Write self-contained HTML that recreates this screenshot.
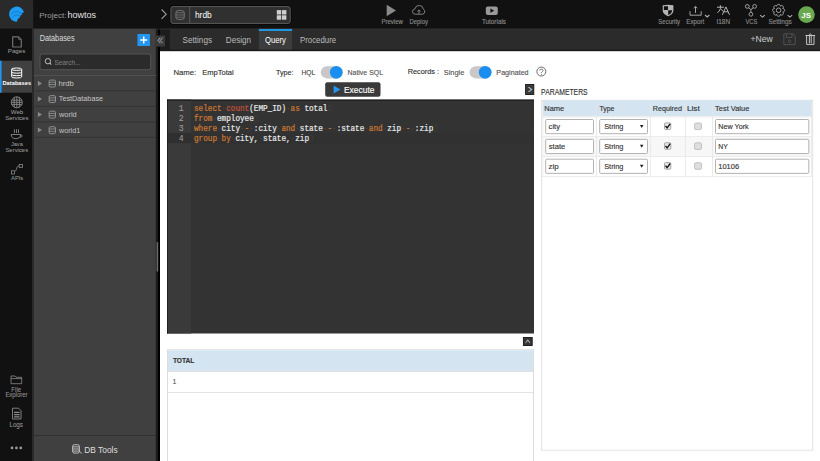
<!DOCTYPE html>
<html><head><meta charset="utf-8"><title>Query - hrdb</title>
<style>
html,body{margin:0;padding:0;background:#fff;width:820px;height:461px;overflow:hidden;font-family:"Liberation Sans", sans-serif;}
svg{display:block}
</style></head>
<body>
<svg width="820" height="461" viewBox="0 0 820 461">
<rect x="0" y="0" width="820" height="461" fill="#ffffff" />
<rect x="0" y="0" width="160" height="461" fill="#000000" />
<rect x="160" y="0" width="660" height="51.2" fill="#1a1a1a" />
<rect x="160" y="28" width="660" height="21.6" fill="#2b2b2b" />
<rect x="160" y="28" width="10" height="22.2" fill="#1c1c1c" />
<rect x="170" y="28.5" width="650" height="1" fill="#333333" />
<rect x="0" y="0" width="820" height="28.5" fill="#111111" />
<rect x="0" y="0" width="33.2" height="29" fill="#2a2a2a" />
<rect x="0" y="28.5" width="32" height="433" fill="#111111" />
<rect x="32" y="28.5" width="2.2" height="433" fill="#2a2a2a" />
<rect x="34" y="28.5" width="122" height="433" fill="#404040" />
<rect x="155.8" y="28.5" width="2.2" height="433" fill="#1a1a1a" />
<rect x="155.8" y="28.6" width="14.2" height="1" fill="#2e2e2e" />
<rect x="156.6" y="242" width="1.6" height="29.7" fill="#6a6a6a" rx="0.8"/>
<path d="M16.6,21.8 A7.6,7.6 0 1 1 24,12.2 L21.1,13.5 Q22.3,13.8 22.4,14.5 L19.7,16.1 Q20.4,16.5 20.4,17.1 L17.8,18.9 Q17.6,20.7 16.6,21.8 Z" fill="#1e9cf2"/>
<path d="M21.1,13.5 A6.4,6.4 0 0 0 11.2,14.3 M19.7,16.1 A4.7,4.7 0 0 0 12.4,17.4" fill="none" stroke="#1676cc" stroke-width="0.85"/>
<text x="39.19" y="17.5" font-size="7.971" fill="#9a9a9a" textLength="27.33" lengthAdjust="spacingAndGlyphs" font-family="'Liberation Sans', sans-serif">Project:</text>
<text x="67.48" y="17.5" font-size="8.767" fill="#e0e0e0" textLength="28.61" lengthAdjust="spacingAndGlyphs" font-family="'Liberation Sans', sans-serif">howtos</text>
<polyline points="161.6,9.5 166.2,14.15 161.6,18.8" fill="none" stroke="#9a9a9a" stroke-width="1.1"/>
<rect x="169.9" y="5.6" width="121.3" height="18.8" rx="2.6" fill="none" stroke="#090909" stroke-width="1"/>
<rect x="170.9" y="6.6" width="119.3" height="16.8" rx="2" fill="#303030" stroke="#5a5a5a" stroke-width="1"/>
<line x1="189.7" y1="7" x2="189.7" y2="23" stroke="#555555" stroke-width="1"/>
<rect x="175.9" y="10.6" width="8.4" height="8.8" rx="2.2" fill="none" stroke="#7a7a7a" stroke-width="0.9"/>
<path d="M176.2,12.8 H184 M176,15 H184.2 M176.2,17.2 H184" stroke="#7a7a7a" stroke-width="0.8"/>
<text x="194.93" y="17.7" font-size="8.904" fill="#ffffff" textLength="16.80" lengthAdjust="spacingAndGlyphs" font-family="'Liberation Sans', sans-serif">hrdb</text>
<rect x="276.8" y="10.1" width="4.4" height="4.4" fill="#cfcfcf" />
<rect x="282" y="10.1" width="4.4" height="4.4" fill="#cfcfcf" />
<rect x="276.8" y="15.3" width="4.4" height="4.4" fill="#cfcfcf" />
<rect x="282" y="15.3" width="4.4" height="4.4" fill="#cfcfcf" />
<path d="M386.7,4.7 L396,10.45 L386.7,16.2 Z" fill="#8a8a8a"/>
<text x="381.53" y="23.6" font-size="6.377" fill="#8a8a8a" stroke="#8a8a8a" stroke-width="0.14" textLength="21.38" lengthAdjust="spacingAndGlyphs" font-family="'Liberation Sans', sans-serif">Preview</text>
<path d="M415.3,14.2 H422.6 A2.7,2.7 0 0 0 423.4,9.2 A4.3,4.3 0 0 0 414.9,9 A2.6,2.6 0 0 0 415.3,14.2 Z M419,14.2 V10 M417.5,11.5 L419,9.9 L420.5,11.5" fill="none" stroke="#8a8a8a" stroke-width="0.9"/>
<text x="409.43" y="23.6" font-size="6.377" fill="#8a8a8a" stroke="#8a8a8a" stroke-width="0.14" textLength="18.56" lengthAdjust="spacingAndGlyphs" font-family="'Liberation Sans', sans-serif">Deploy</text>
<rect x="485.8" y="6.4" width="12" height="8.6" rx="2" fill="#9a9a9a"/>
<path d="M490.4,8.6 L494.2,10.7 L490.4,12.8 Z" fill="#111"/>
<text x="481.90" y="23.5" font-size="6.667" fill="#8a8a8a" stroke="#8a8a8a" stroke-width="0.14" textLength="24.12" lengthAdjust="spacingAndGlyphs" font-family="'Liberation Sans', sans-serif">Tutorials</text>
<path d="M662.7,5.2 Q668,4.2 673.4,5.2 V10.4 C673.4,13.2 671,15.2 668.2,16.2 C665.2,15.2 662.7,13.2 662.7,10.4 Z" fill="#b4b4b4"/>
<path d="M663.9,6.3 H668 V10.1 H663.9 Z M668.2,10.3 H672.2 C672,12.6 670.6,14.1 668.2,15 Z" fill="#111111"/>
<text x="658.35" y="23.8" font-size="7.246" fill="#8a8a8a" stroke="#8a8a8a" stroke-width="0.14" textLength="21.79" lengthAdjust="spacingAndGlyphs" font-family="'Liberation Sans', sans-serif">Security</text>
<path d="M690,11.2 V15.2 H701.2 V11.2 M695.5,13 V6.5 M693.7,8.1 L695.5,6.4 L697.3,8.1" fill="none" stroke="#aaaaaa" stroke-width="0.95"/>
<polyline points="705,15 707.2,17 709.4,15" fill="none" stroke="#b0b0b0" stroke-width="1.05"/>
<text x="686.37" y="23.8" font-size="7.246" fill="#8a8a8a" stroke="#8a8a8a" stroke-width="0.14" textLength="17.94" lengthAdjust="spacingAndGlyphs" font-family="'Liberation Sans', sans-serif">Export</text>
<path d="M717,7.2 H723.9 M720.4,5.2 V8.6 Q719.6,11.2 717.4,12.9 M720.6,8.8 L723,11.2 M722.4,14.8 L725.9,6.9 L729.5,14.8 M723.7,11.8 H728.2" fill="none" stroke="#b4b4b4" stroke-width="1"/>
<text x="716.47" y="23.8" font-size="7.246" fill="#8a8a8a" stroke="#8a8a8a" stroke-width="0.14" textLength="13.61" lengthAdjust="spacingAndGlyphs" font-family="'Liberation Sans', sans-serif">I18N</text>
<g fill="none" stroke="#aaaaaa" stroke-width="0.9"><circle cx="747.3" cy="6.4" r="1.9"/><circle cx="754.6" cy="6.4" r="1.9"/><circle cx="750.9" cy="14.3" r="1.9"/><path d="M748.6,7.8 L750.9,9.6 L753.3,7.8 M750.9,9.6 V12.4"/></g>
<polyline points="760.2,15.1 762.5,17.1 764.8,15.1" fill="none" stroke="#b0b0b0" stroke-width="1.05"/>
<text x="745.40" y="23.8" font-size="7.246" fill="#8a8a8a" stroke="#8a8a8a" stroke-width="0.14" textLength="11.86" lengthAdjust="spacingAndGlyphs" font-family="'Liberation Sans', sans-serif">VCS</text>
<path d="M776.88,6.14 C776.83,3.63 780.37,3.63 780.32,6.14 C782.06,4.33 784.57,6.84 782.76,8.58 C785.27,8.53 785.27,12.07 782.76,12.02 C784.57,13.76 782.06,16.27 780.32,14.46 C780.37,16.97 776.83,16.97 776.88,14.46 C775.14,16.27 772.63,13.76 774.44,12.02 C771.93,12.07 771.93,8.53 774.44,8.58 C772.63,6.84 775.14,4.33 776.88,6.14 Z" fill="none" stroke="#aaaaaa" stroke-width="0.95" stroke-linejoin="round"/>
<circle cx="778.6" cy="10.3" r="2.3" fill="none" stroke="#aaaaaa" stroke-width="0.9"/>
<polyline points="787.6,15.1 789.9,17.1 792.2,15.1" fill="none" stroke="#b0b0b0" stroke-width="1.05"/>
<text x="768.43" y="23.8" font-size="7.246" fill="#8a8a8a" stroke="#8a8a8a" stroke-width="0.14" textLength="23.26" lengthAdjust="spacingAndGlyphs" font-family="'Liberation Sans', sans-serif">Settings</text>
<circle cx="806.5" cy="14.6" r="8.3" fill="#6aa84f"/>
<text x="801.30" y="17.7" font-size="7.857" fill="#ffffff" font-weight="700" textLength="9.74" lengthAdjust="spacingAndGlyphs" font-family="'Liberation Sans', sans-serif">JS</text>
<path d="M12.7,36.8 H18.6 L21.3,39.6 V47 H12.7 Z" fill="none" stroke="#707070" stroke-width="1.2" stroke-linejoin="round"/>
<path d="M18.6,36.8 V39.6 H21.3" fill="none" stroke="#707070" stroke-width="0.7"/>
<text x="7.79" y="53.4" font-size="6.087" fill="#999999" stroke="#999999" stroke-width="0.05" textLength="17.55" lengthAdjust="spacingAndGlyphs" font-family="'Liberation Sans', sans-serif">Pages</text>
<rect x="0" y="60.7" width="32" height="32" fill="#404040" />
<rect x="0" y="60.7" width="1.6" height="32" fill="#2196f3" />
<g fill="none" stroke="#ffffff" stroke-width="1"><ellipse cx="16.7" cy="69.2" rx="5.0" ry="1.2"/><path d="M11.7,69.2 V76.8 A5.0,1.2 0 0 0 21.7,76.8 V69.2"/><path d="M11.7,72.0 A5.0,1.2 0 0 0 21.7,72.0"/><path d="M11.7,74.5 A5.0,1.2 0 0 0 21.7,74.5"/></g>
<text x="2.50" y="85.1" font-size="5.714" fill="#ffffff" font-weight="700" textLength="28.58" lengthAdjust="spacingAndGlyphs" font-family="'Liberation Sans', sans-serif">Databases</text>
<g fill="none" stroke="#8f8f8f" stroke-width="0.85"><circle cx="16.8" cy="102.3" r="5.5"/><path d="M11.3,102.3 H22.3 M11.7,100.2 H21.9 M11.7,104.4 H21.9 M16.8,96.8 V107.8 M14.5,97.3 C13.9,100 13.9,104.6 14.5,107.3 M19.1,97.3 C19.7,100 19.7,104.6 19.1,107.3"/></g>
<text x="10.80" y="113.8" font-size="6.087" fill="#999999" stroke="#999999" stroke-width="0.05" textLength="12.38" lengthAdjust="spacingAndGlyphs" font-family="'Liberation Sans', sans-serif">Web</text>
<text x="5.20" y="119.8" font-size="6.087" fill="#999999" stroke="#999999" stroke-width="0.05" textLength="23.24" lengthAdjust="spacingAndGlyphs" font-family="'Liberation Sans', sans-serif">Services</text>
<g fill="none" stroke="#8a8a8a" stroke-width="0.9"><path d="M14.4,129.3 V133 M16.5,129.3 V133 M18.5,129.3 V133"/><path d="M11.2,134.5 H20.6 C20.6,137.2 18.8,138.7 15.9,138.7 C13,138.7 11.2,137.2 11.2,134.5 Z M20.4,135 C22.8,134.6 22.8,137.3 19.8,137.3"/></g>
<text x="10.90" y="145.8" font-size="6.087" fill="#999999" stroke="#999999" stroke-width="0.05" textLength="11.89" lengthAdjust="spacingAndGlyphs" font-family="'Liberation Sans', sans-serif">Java</text>
<text x="5.41" y="151.9" font-size="6.087" fill="#999999" stroke="#999999" stroke-width="0.05" textLength="22.73" lengthAdjust="spacingAndGlyphs" font-family="'Liberation Sans', sans-serif">Services</text>
<g fill="none" stroke="#8a8a8a" stroke-width="0.8"><rect x="11.4" y="170.8" width="3.2" height="3.2"/><rect x="19.2" y="164.4" width="3.2" height="3.2"/><path d="M14.6,171.2 C16,171 16.5,169.5 16.8,168 C17,166.5 17.8,166 19.2,166"/></g>
<text x="11.10" y="180.3" font-size="6.087" fill="#999999" stroke="#999999" stroke-width="0.05" textLength="12.13" lengthAdjust="spacingAndGlyphs" font-family="'Liberation Sans', sans-serif">APIs</text>
<path d="M11,376 H15 L16,377.3 H21.7 V383.7 H11 Z M11,378.6 H21.7" fill="none" stroke="#8a8a8a" stroke-width="0.8"/>
<text x="11.32" y="391.6" font-size="6.377" fill="#999999" stroke="#999999" stroke-width="0.05" textLength="9.81" lengthAdjust="spacingAndGlyphs" font-family="'Liberation Sans', sans-serif">File</text>
<text x="5.44" y="397.4" font-size="6.377" fill="#999999" stroke="#999999" stroke-width="0.05" textLength="21.98" lengthAdjust="spacingAndGlyphs" font-family="'Liberation Sans', sans-serif">Explorer</text>
<path d="M12.5,408.2 H18.6 L21,410.6 V419 H12.5 Z" fill="none" stroke="#8a8a8a" stroke-width="0.9"/>
<path d="M14,412.4 H19.6 M14,414.6 H19.6 M14,416.8 H19.6" fill="none" stroke="#8a8a8a" stroke-width="1.2"/>
<text x="9.41" y="426.6" font-size="6.377" fill="#999999" stroke="#999999" stroke-width="0.05" textLength="13.58" lengthAdjust="spacingAndGlyphs" font-family="'Liberation Sans', sans-serif">Logs</text>
<circle cx="12" cy="447.9" r="1.35" fill="#9a9a9a"/>
<circle cx="16.4" cy="447.9" r="1.35" fill="#9a9a9a"/>
<circle cx="20.8" cy="447.9" r="1.35" fill="#9a9a9a"/>
<text x="39.68" y="41.0" font-size="8.406" fill="#dddddd" textLength="34.88" lengthAdjust="spacingAndGlyphs" font-family="'Liberation Sans', sans-serif">Databases</text>
<rect x="137.5" y="34" width="12.5" height="12" fill="#2196f3" />
<path d="M143.75,36.5 V43.5 M140.25,40 H147.25" stroke="#ffffff" stroke-width="1.4"/>
<rect x="40" y="54" width="110.7" height="15.7" rx="2" fill="#2b2b2b" stroke="#555555" stroke-width="1"/>
<circle cx="47.9" cy="61.2" r="2.7" fill="none" stroke="#bbbbbb" stroke-width="1"/><path d="M49.8,63.1 L51.3,64.6" stroke="#bbbbbb" stroke-width="1.1"/>
<text x="54.55" y="64.5" font-size="7.826" fill="#777777" stroke="#777777" stroke-width="0.14" textLength="25.80" lengthAdjust="spacingAndGlyphs" font-family="'Liberation Sans', sans-serif">Search...</text>
<rect x="34" y="75" width="122.4" height="1" fill="#4f4f4f" />
<path d="M37.9,80.85000000000001 L42,83.4 L37.9,85.95 Z" fill="#8a8a8a"/>
<rect x="49.1" y="80.10000000000001" width="6.4" height="6.9" rx="1.3" fill="none" stroke="#999999" stroke-width="0.9"/>
<path d="M49.1,82.30000000000001 H55.5 M49.1,84.60000000000001 H55.5" stroke="#999999" stroke-width="0.8"/>
<text x="58.40" y="85.9" font-size="7.671" fill="#c4c4c4" textLength="15.37" lengthAdjust="spacingAndGlyphs" font-family="'Liberation Sans', sans-serif">hrdb</text>
<rect x="34" y="90.2" width="122" height="1.1" fill="#353535" />
<path d="M37.9,96.4 L42,98.95 L37.9,101.5 Z" fill="#8a8a8a"/>
<rect x="49.1" y="95.65" width="6.4" height="6.9" rx="1.3" fill="none" stroke="#999999" stroke-width="0.9"/>
<path d="M49.1,97.85000000000001 H55.5 M49.1,100.15 H55.5" stroke="#999999" stroke-width="0.8"/>
<text x="58.81" y="101.45" font-size="8.116" fill="#c4c4c4" textLength="44.27" lengthAdjust="spacingAndGlyphs" font-family="'Liberation Sans', sans-serif">TestDatabase</text>
<rect x="34" y="105.75" width="122" height="1.1" fill="#353535" />
<path d="M37.9,111.95 L42,114.5 L37.9,117.05 Z" fill="#8a8a8a"/>
<rect x="49.1" y="111.2" width="6.4" height="6.9" rx="1.3" fill="none" stroke="#999999" stroke-width="0.9"/>
<path d="M49.1,113.4 H55.5 M49.1,115.7 H55.5" stroke="#999999" stroke-width="0.8"/>
<text x="59.00" y="117.0" font-size="7.671" fill="#c4c4c4" textLength="17.75" lengthAdjust="spacingAndGlyphs" font-family="'Liberation Sans', sans-serif">world</text>
<rect x="34" y="121.30000000000001" width="122" height="1.1" fill="#353535" />
<path d="M37.9,127.50000000000001 L42,130.05 L37.9,132.60000000000002 Z" fill="#8a8a8a"/>
<rect x="49.1" y="126.75000000000001" width="6.4" height="6.9" rx="1.3" fill="none" stroke="#999999" stroke-width="0.9"/>
<path d="M49.1,128.95000000000002 H55.5 M49.1,131.25 H55.5" stroke="#999999" stroke-width="0.8"/>
<text x="58.99" y="132.55" font-size="7.671" fill="#c4c4c4" textLength="21.15" lengthAdjust="spacingAndGlyphs" font-family="'Liberation Sans', sans-serif">world1</text>
<rect x="34" y="136.85000000000002" width="122" height="1.1" fill="#353535" />
<rect x="34" y="435" width="122.4" height="0.8" fill="#2e2e2e" />
<rect x="72.6" y="444.7" width="6.8" height="8.4" rx="1.8" fill="none" stroke="#cccccc" stroke-width="0.9"/>
<path d="M72.8,446.9 H79.2 M72.8,449 H79.2 M72.8,451.1 H78.6 M78.6,450.4 L81.9,453.7" fill="none" stroke="#cccccc" stroke-width="0.9"/>
<text x="84.15" y="452.5" font-size="8.986" fill="#dddddd" textLength="33.53" lengthAdjust="spacingAndGlyphs" font-family="'Liberation Sans', sans-serif">DB Tools</text>
<rect x="155.8" y="35.5" width="9.2" height="11" fill="#3a3a3a" />
<path d="M160.3,37.6 L158,40.4 L160.3,43.2 M162.6,37.6 L160.3,40.4 L162.6,43.2" fill="none" stroke="#a9b4bf" stroke-width="0.9"/>
<text x="182.61" y="42.8" font-size="8.406" fill="#bbbbbb" textLength="29.38" lengthAdjust="spacingAndGlyphs" font-family="'Liberation Sans', sans-serif">Settings</text>
<text x="225.82" y="42.8" font-size="8.406" fill="#bbbbbb" textLength="25.13" lengthAdjust="spacingAndGlyphs" font-family="'Liberation Sans', sans-serif">Design</text>
<rect x="258.8" y="28.6" width="33.3" height="21" fill="#3d3d3d" />
<rect x="258.8" y="29" width="33.3" height="2" fill="#2196e0" />
<text x="264.92" y="42.8" font-size="8.406" fill="#ffffff" textLength="21.08" lengthAdjust="spacingAndGlyphs" font-family="'Liberation Sans', sans-serif">Query</text>
<text x="300.04" y="42.8" font-size="8.406" fill="#bbbbbb" textLength="36.11" lengthAdjust="spacingAndGlyphs" font-family="'Liberation Sans', sans-serif">Procedure</text>
<text x="750.52" y="41.9" font-size="8.986" fill="#cccccc" textLength="22.28" lengthAdjust="spacingAndGlyphs" font-family="'Liberation Sans', sans-serif">+New</text>
<path d="M783.9,33.8 H793 L795.2,36 V44.6 H783.9 Z M786.4,33.8 V37.5 H792 V33.8" fill="none" stroke="#555555" stroke-width="0.9"/><circle cx="789.5" cy="41.3" r="1.3" fill="none" stroke="#555555" stroke-width="0.9"/>
<path d="M805.5,35.5 H815.1 M806.6,35.5 V44.4 H814 V35.5 M809.4,43.3 V34.5 Q810.3,33 811.2,34.5 V43.3" fill="none" stroke="#cccccc" stroke-width="0.95"/>
<text x="173.42" y="74.8" font-size="7.971" fill="#333333" stroke="#333333" stroke-width="0.14" textLength="22.67" lengthAdjust="spacingAndGlyphs" font-family="'Liberation Sans', sans-serif">Name:</text>
<text x="202.13" y="74.8" font-size="7.971" fill="#333333" stroke="#333333" stroke-width="0.14" textLength="31.52" lengthAdjust="spacingAndGlyphs" font-family="'Liberation Sans', sans-serif">EmpTotal</text>
<text x="276.01" y="74.7" font-size="8.116" fill="#333333" stroke="#333333" stroke-width="0.14" textLength="17.57" lengthAdjust="spacingAndGlyphs" font-family="'Liberation Sans', sans-serif">Type:</text>
<text x="301.40" y="74.7" font-size="8.116" fill="#444444" stroke="#444444" stroke-width="0.14" textLength="13.77" lengthAdjust="spacingAndGlyphs" font-family="'Liberation Sans', sans-serif">HQL</text>
<rect x="320.8" y="66.2" width="20" height="12.2" rx="6.1" fill="#c9c7c7"/><circle cx="336.3" cy="72.3" r="6.4" fill="#1b8ff0"/>
<text x="347.49" y="74.7" font-size="8.116" fill="#555555" stroke="#555555" stroke-width="0.14" textLength="35.60" lengthAdjust="spacingAndGlyphs" font-family="'Liberation Sans', sans-serif">Native SQL</text>
<text x="407.65" y="74.4" font-size="7.971" fill="#333333" stroke="#333333" stroke-width="0.14" textLength="31.41" lengthAdjust="spacingAndGlyphs" font-family="'Liberation Sans', sans-serif">Records :</text>
<text x="443.73" y="74.6" font-size="8.116" fill="#555555" stroke="#555555" stroke-width="0.14" textLength="20.56" lengthAdjust="spacingAndGlyphs" font-family="'Liberation Sans', sans-serif">Single</text>
<rect x="469.6" y="66.2" width="20" height="12.2" rx="6.1" fill="#c9c7c7"/><circle cx="485.2" cy="72.3" r="6.4" fill="#1b8ff0"/>
<text x="496.36" y="74.6" font-size="7.971" fill="#555555" stroke="#555555" stroke-width="0.14" textLength="32.23" lengthAdjust="spacingAndGlyphs" font-family="'Liberation Sans', sans-serif">Paginated</text>
<circle cx="541.35" cy="71.55" r="4.5" fill="none" stroke="#555555" stroke-width="0.85"/>
<path d="M539.7,70.5 Q539.8,69.1 541.35,69.1 Q542.9,69.1 542.9,70.5 Q542.9,71.4 541.9,71.9 Q541.35,72.2 541.35,73.1" fill="none" stroke="#555555" stroke-width="0.8"/><circle cx="541.35" cy="74.4" r="0.5" fill="#555555"/>
<rect x="325.2" y="82.2" width="55.3" height="14.6" rx="2" fill="#3a3a3a"/>
<path d="M333.6,85.6 L340.5,89.5 L333.6,93.4 Z" fill="#2196f3"/>
<text x="343.97" y="92.75" font-size="9.42" fill="#ffffff" stroke="#ffffff" stroke-width="0.14" textLength="30.53" lengthAdjust="spacingAndGlyphs" font-family="'Liberation Sans', sans-serif">Execute</text>
<rect x="525.6" y="84.5" width="8.2" height="10" fill="#3a3a3a" stroke="#161616" stroke-width="0.9"/>
<path d="M527.7,87 L529.4,87 L532.6,89.5 L529.4,92 L527.7,92 L530.6,89.5 Z" fill="#a9b4bf"/>
<rect x="167.1" y="99.6" width="366.9" height="233.9" fill="#333333" />
<rect x="167.1" y="99.6" width="24.1" height="233.9" fill="#3a3a3a" />
<rect x="167.1" y="133" width="24.1" height="10.2" fill="#2f2f2f" />
<rect x="191.2" y="133" width="342.8" height="10.2" fill="#313131" />
<rect x="167.1" y="99.6" width="366.9" height="1" fill="#161616" />
<rect x="167.1" y="99.6" width="0.9" height="233.9" fill="#1e1e1e" />
<text x="183.6" y="110.8" font-size="8.2" fill="#9a9a9a" stroke="#9a9a9a" stroke-width="0.1" text-anchor="end" font-family="'Liberation Mono', monospace" >1</text>
<text transform="translate(194,110.8) scale(0.924,1)" x="0" y="0" font-size="8.3" font-family="'Liberation Mono', monospace" xml:space="preserve"><tspan fill="#cc7832" stroke="#cc7832" stroke-width="0.22">select</tspan><tspan fill="#4a4a4a">·</tspan><tspan fill="#c4513a" stroke="#c4513a" stroke-width="0.22">count</tspan><tspan fill="#e6e6e6" stroke="#e6e6e6" stroke-width="0.22">(EMP_ID)</tspan><tspan fill="#4a4a4a">·</tspan><tspan fill="#cc7832" stroke="#cc7832" stroke-width="0.22">as</tspan><tspan fill="#4a4a4a">·</tspan><tspan fill="#e6e6e6" stroke="#e6e6e6" stroke-width="0.22">total</tspan></text>
<rect x="328.2" y="105.3" width="3" height="5.5" fill="none" stroke="#3e3e3e" stroke-width="0.6"/>
<text x="183.6" y="120.89999999999999" font-size="8.2" fill="#9a9a9a" stroke="#9a9a9a" stroke-width="0.1" text-anchor="end" font-family="'Liberation Mono', monospace" >2</text>
<text transform="translate(194,120.89999999999999) scale(0.924,1)" x="0" y="0" font-size="8.3" font-family="'Liberation Mono', monospace" xml:space="preserve"><tspan fill="#cc7832" stroke="#cc7832" stroke-width="0.22">from</tspan><tspan fill="#4a4a4a">·</tspan><tspan fill="#e6e6e6" stroke="#e6e6e6" stroke-width="0.22">employee</tspan></text>
<rect x="254.60000000000002" y="115.39999999999999" width="3" height="5.5" fill="none" stroke="#3e3e3e" stroke-width="0.6"/>
<text x="183.6" y="131.0" font-size="8.2" fill="#9a9a9a" stroke="#9a9a9a" stroke-width="0.1" text-anchor="end" font-family="'Liberation Mono', monospace" >3</text>
<text transform="translate(194,131.0) scale(0.924,1)" x="0" y="0" font-size="8.3" font-family="'Liberation Mono', monospace" xml:space="preserve"><tspan fill="#cc7832" stroke="#cc7832" stroke-width="0.22">where</tspan><tspan fill="#4a4a4a">·</tspan><tspan fill="#e6e6e6" stroke="#e6e6e6" stroke-width="0.22">city</tspan><tspan fill="#4a4a4a">·</tspan><tspan fill="#cc7832" stroke="#cc7832" stroke-width="0.22">-</tspan><tspan fill="#4a4a4a">·</tspan><tspan fill="#e6e6e6" stroke="#e6e6e6" stroke-width="0.22">:city</tspan><tspan fill="#4a4a4a">·</tspan><tspan fill="#cc7832" stroke="#cc7832" stroke-width="0.22">and</tspan><tspan fill="#4a4a4a">·</tspan><tspan fill="#e6e6e6" stroke="#e6e6e6" stroke-width="0.22">state</tspan><tspan fill="#4a4a4a">·</tspan><tspan fill="#cc7832" stroke="#cc7832" stroke-width="0.22">-</tspan><tspan fill="#4a4a4a">·</tspan><tspan fill="#e6e6e6" stroke="#e6e6e6" stroke-width="0.22">:state</tspan><tspan fill="#4a4a4a">·</tspan><tspan fill="#cc7832" stroke="#cc7832" stroke-width="0.22">and</tspan><tspan fill="#4a4a4a">·</tspan><tspan fill="#e6e6e6" stroke="#e6e6e6" stroke-width="0.22">zip</tspan><tspan fill="#4a4a4a">·</tspan><tspan fill="#cc7832" stroke="#cc7832" stroke-width="0.22">-</tspan><tspan fill="#4a4a4a">·</tspan><tspan fill="#e6e6e6" stroke="#e6e6e6" stroke-width="0.22">:zip</tspan></text>
<rect x="434.0" y="125.5" width="3" height="5.5" fill="none" stroke="#3e3e3e" stroke-width="0.6"/>
<text x="183.6" y="141.1" font-size="8.2" fill="#9a9a9a" stroke="#9a9a9a" stroke-width="0.1" text-anchor="end" font-family="'Liberation Mono', monospace" >4</text>
<text transform="translate(194,141.1) scale(0.924,1)" x="0" y="0" font-size="8.3" font-family="'Liberation Mono', monospace" xml:space="preserve"><tspan fill="#cc7832" stroke="#cc7832" stroke-width="0.22">group</tspan><tspan fill="#4a4a4a">·</tspan><tspan fill="#cc7832" stroke="#cc7832" stroke-width="0.22">by</tspan><tspan fill="#4a4a4a">·</tspan><tspan fill="#e6e6e6" stroke="#e6e6e6" stroke-width="0.22">city,</tspan><tspan fill="#4a4a4a">·</tspan><tspan fill="#e6e6e6" stroke="#e6e6e6" stroke-width="0.22">state,</tspan><tspan fill="#4a4a4a">·</tspan><tspan fill="#e6e6e6" stroke="#e6e6e6" stroke-width="0.22">zip</tspan></text>
<rect x="309.8" y="135.6" width="3" height="5.5" fill="none" stroke="#3e3e3e" stroke-width="0.6"/>
<rect x="523.4" y="337.5" width="8.8" height="8" fill="#353535" stroke="#141414" stroke-width="0.9"/>
<path d="M525.5,343.6 V342.2 L527.8,339.3 L530.1,342.2 V343.6 L527.8,341 Z" fill="#a9b4bf"/>
<rect x="167.5" y="349.8" width="366" height="120" fill="#ffffff" stroke="#dddddd" stroke-width="1"/>
<rect x="168" y="350.3" width="365" height="20.9" fill="#d4e4f0" />
<rect x="167.5" y="371.2" width="366" height="0.8" fill="#dddddd" />
<rect x="167.5" y="392" width="366" height="0.8" fill="#dddddd" />
<text x="172.90" y="362.9" font-size="8.0" fill="#333333" stroke="#333333" stroke-width="0.14" font-weight="700" textLength="21.45" lengthAdjust="spacingAndGlyphs" font-family="'Liberation Sans', sans-serif">TOTAL</text>
<text x="172.79" y="384" font-size="7.536" fill="#555555" stroke="#555555" stroke-width="0.14" textLength="3.45" lengthAdjust="spacingAndGlyphs" font-family="'Liberation Sans', sans-serif">1</text>
<text x="541.11" y="94.9" font-size="8.406" fill="#333333" stroke="#333333" stroke-width="0.14" textLength="46.54" lengthAdjust="spacingAndGlyphs" font-family="'Liberation Sans', sans-serif">PARAMETERS</text>
<rect x="541.6" y="100.3" width="271.1" height="349.9" fill="#ffffff" stroke="#e3e3e3" stroke-width="1"/>
<rect x="542.5" y="100.3" width="0.8" height="76.2" fill="#ececec" />
<rect x="542.8" y="100.3" width="269" height="16" fill="#d4e4f0" />
<text x="544.33" y="110.5" font-size="7.826" fill="#333333" stroke="#333333" stroke-width="0.14" textLength="19.91" lengthAdjust="spacingAndGlyphs" font-family="'Liberation Sans', sans-serif">Name</text>
<text x="599.51" y="110.5" font-size="7.826" fill="#333333" stroke="#333333" stroke-width="0.14" textLength="14.91" lengthAdjust="spacingAndGlyphs" font-family="'Liberation Sans', sans-serif">Type</text>
<text x="652.85" y="110.5" font-size="7.826" fill="#333333" stroke="#333333" stroke-width="0.14" textLength="29.06" lengthAdjust="spacingAndGlyphs" font-family="'Liberation Sans', sans-serif">Required</text>
<text x="686.97" y="110.5" font-size="7.826" fill="#333333" stroke="#333333" stroke-width="0.14" textLength="12.70" lengthAdjust="spacingAndGlyphs" font-family="'Liberation Sans', sans-serif">List</text>
<text x="715.00" y="110.5" font-size="7.826" fill="#333333" stroke="#333333" stroke-width="0.14" textLength="34.34" lengthAdjust="spacingAndGlyphs" font-family="'Liberation Sans', sans-serif">Test Value</text>
<rect x="596.0" y="100.2" width="0.8" height="76.3" fill="#e5e5e5" />
<rect x="649.9" y="100.2" width="0.8" height="76.3" fill="#e5e5e5" />
<rect x="684.9" y="100.2" width="0.8" height="76.3" fill="#e5e5e5" />
<rect x="712.1" y="100.2" width="0.8" height="76.3" fill="#e5e5e5" />
<rect x="810.9" y="100.2" width="0.8" height="76.3" fill="#e5e5e5" />
<rect x="542.4" y="116.6" width="269" height="0.8" fill="#e5e5e5" />
<rect x="542.4" y="136.25" width="269" height="0.8" fill="#e8e8e8" />
<rect x="545.7" y="119.5" width="47.8" height="14.2" rx="1" fill="#ffffff" stroke="#a9a9a9" stroke-width="0.9"/>
<text x="548.62" y="128.8" font-size="8.065" fill="#333333" stroke="#333333" stroke-width="0.14" textLength="11.42" lengthAdjust="spacingAndGlyphs" font-family="'Liberation Sans', sans-serif">city</text>
<rect x="599.7" y="119.5" width="47.8" height="14.2" rx="1" fill="#ffffff" stroke="#a9a9a9" stroke-width="0.9"/>
<text x="604.22" y="128.8" font-size="7.826" fill="#333333" stroke="#333333" stroke-width="0.14" textLength="19.21" lengthAdjust="spacingAndGlyphs" font-family="'Liberation Sans', sans-serif">String</text>
<path d="M639.9,125.0 H643.5 L641.7,128.0 Z" fill="#222"/>
<rect x="664.5" y="122.89999999999999" width="6.3" height="6.6" rx="1" fill="#e6e6e6" stroke="#8a8a8a" stroke-width="0.7"/>
<path d="M665.5,126.0 L667.1,128.0 L670.2,123.8" fill="none" stroke="#111" stroke-width="1.3"/>
<rect x="694.5" y="123.0" width="7" height="6.6" rx="1.5" fill="#dedede" stroke="#b0b0b0" stroke-width="0.7"/>
<rect x="715.5" y="119.5" width="93.3" height="14.2" rx="1" fill="#ffffff" stroke="#a9a9a9" stroke-width="0.9"/>
<text x="718.22" y="128.8" font-size="7.391" fill="#333333" stroke="#333333" stroke-width="0.14" textLength="30.48" lengthAdjust="spacingAndGlyphs" font-family="'Liberation Sans', sans-serif">New York</text>
<rect x="542.8" y="137.05" width="268.2" height="19.4" fill="#f7f7f7" />
<rect x="596.0" y="136.65" width="0.8" height="19.85" fill="#e5e5e5" />
<rect x="649.9" y="136.65" width="0.8" height="19.85" fill="#e5e5e5" />
<rect x="684.9" y="136.65" width="0.8" height="19.85" fill="#e5e5e5" />
<rect x="712.1" y="136.65" width="0.8" height="19.85" fill="#e5e5e5" />
<rect x="542.4" y="156.1" width="269" height="0.8" fill="#e8e8e8" />
<rect x="545.7" y="139.35" width="47.8" height="14.2" rx="1" fill="#ffffff" stroke="#a9a9a9" stroke-width="0.9"/>
<text x="548.71" y="148.65" font-size="8.065" fill="#333333" stroke="#333333" stroke-width="0.14" textLength="16.56" lengthAdjust="spacingAndGlyphs" font-family="'Liberation Sans', sans-serif">state</text>
<rect x="599.7" y="139.35" width="47.8" height="14.2" rx="1" fill="#ffffff" stroke="#a9a9a9" stroke-width="0.9"/>
<text x="604.22" y="148.65" font-size="7.826" fill="#333333" stroke="#333333" stroke-width="0.14" textLength="19.21" lengthAdjust="spacingAndGlyphs" font-family="'Liberation Sans', sans-serif">String</text>
<path d="M639.9,144.85 H643.5 L641.7,147.85 Z" fill="#222"/>
<rect x="664.5" y="142.75" width="6.3" height="6.6" rx="1" fill="#e6e6e6" stroke="#8a8a8a" stroke-width="0.7"/>
<path d="M665.5,145.85 L667.1,147.85 L670.2,143.65" fill="none" stroke="#111" stroke-width="1.3"/>
<rect x="694.5" y="142.85" width="7" height="6.6" rx="1.5" fill="#dedede" stroke="#b0b0b0" stroke-width="0.7"/>
<rect x="715.5" y="139.35" width="93.3" height="14.2" rx="1" fill="#ffffff" stroke="#a9a9a9" stroke-width="0.9"/>
<text x="718.24" y="148.65" font-size="7.391" fill="#333333" stroke="#333333" stroke-width="0.14" textLength="9.58" lengthAdjust="spacingAndGlyphs" font-family="'Liberation Sans', sans-serif">NY</text>
<rect x="542.4" y="175.95" width="269" height="0.8" fill="#e8e8e8" />
<rect x="545.7" y="159.2" width="47.8" height="14.2" rx="1" fill="#ffffff" stroke="#a9a9a9" stroke-width="0.9"/>
<text x="548.60" y="168.5" font-size="8.065" fill="#333333" stroke="#333333" stroke-width="0.14" textLength="10.18" lengthAdjust="spacingAndGlyphs" font-family="'Liberation Sans', sans-serif">zip</text>
<rect x="599.7" y="159.2" width="47.8" height="14.2" rx="1" fill="#ffffff" stroke="#a9a9a9" stroke-width="0.9"/>
<text x="604.22" y="168.5" font-size="7.826" fill="#333333" stroke="#333333" stroke-width="0.14" textLength="19.21" lengthAdjust="spacingAndGlyphs" font-family="'Liberation Sans', sans-serif">String</text>
<path d="M639.9,164.7 H643.5 L641.7,167.7 Z" fill="#222"/>
<rect x="664.5" y="162.6" width="6.3" height="6.6" rx="1" fill="#e6e6e6" stroke="#8a8a8a" stroke-width="0.7"/>
<path d="M665.5,165.7 L667.1,167.7 L670.2,163.5" fill="none" stroke="#111" stroke-width="1.3"/>
<rect x="694.5" y="162.7" width="7" height="6.6" rx="1.5" fill="#dedede" stroke="#b0b0b0" stroke-width="0.7"/>
<rect x="715.5" y="159.2" width="93.3" height="14.2" rx="1" fill="#ffffff" stroke="#a9a9a9" stroke-width="0.9"/>
<text x="718.29" y="168.5" font-size="7.391" fill="#333333" stroke="#333333" stroke-width="0.14" textLength="20.82" lengthAdjust="spacingAndGlyphs" font-family="'Liberation Sans', sans-serif">10106</text>
</svg>
</body></html>
